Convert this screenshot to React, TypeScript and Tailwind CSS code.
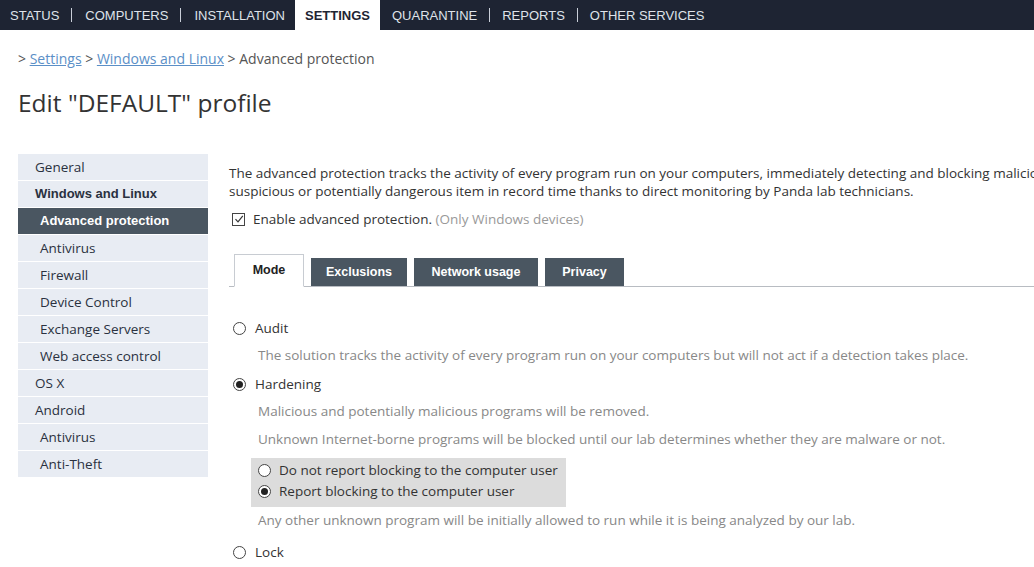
import React from "react";

const lib = { fontFamily: '"Liberation Sans", Arial, sans-serif' };
const os = { fontFamily: '"Open Sans", "Liberation Sans", Arial, sans-serif' };

function Radio({ checked }: { checked?: boolean }) {
  return (
    <span className="inline-flex items-center justify-center w-[13px] h-[13px] rounded-full border border-[#444] bg-white shrink-0">
      {checked && <span className="w-[7px] h-[7px] rounded-full bg-[#222]" />}
    </span>
  );
}

const navLeft = ["STATUS", "COMPUTERS", "INSTALLATION"];
const navRight = ["QUARANTINE", "REPORTS", "OTHER SERVICES"];

const side: { label: string; level: number; bold?: boolean; active?: boolean }[] = [
  { label: "General", level: 0 },
  { label: "Windows and Linux", level: 0, bold: true },
  { label: "Advanced protection", level: 1, active: true },
  { label: "Antivirus", level: 1 },
  { label: "Firewall", level: 1 },
  { label: "Device Control", level: 1 },
  { label: "Exchange Servers", level: 1 },
  { label: "Web access control", level: 1 },
  { label: "OS X", level: 0 },
  { label: "Android", level: 0 },
  { label: "Antivirus", level: 1 },
  { label: "Anti-Theft", level: 1 },
];

export default function App() {
  return (
    <div className="w-[1034px] h-[567px] overflow-hidden bg-white text-[#333] text-[13.5px]" style={os}>
      {/* top nav */}
      <div className="h-[30px] bg-[#1e2433] flex items-stretch text-[#dfe3ea] text-[13px]" style={lib}>
        {navLeft.map((n, i) => (
          <React.Fragment key={n}>
            {i > 0 && <span className="self-center w-px h-[14px] bg-[#c9ced8]" />}
            <span className={`flex items-center pt-px ${i === 0 ? "pl-[10px]" : "pl-[13px]"} ${i === 2 ? "pr-[10px]" : "pr-[12px]"}`}>{n}</span>
          </React.Fragment>
        ))}
        <span className="flex items-center pt-px bg-white text-[#1e2433] font-bold text-[13px] px-[10px]">SETTINGS</span>
        {navRight.map((n, i) => (
          <React.Fragment key={n}>
            {i > 0 && <span className="self-center w-px h-[14px] bg-[#c9ced8]" />}
            <span className="flex items-center pt-px pl-[12px] pr-[12px]">{n}</span>
          </React.Fragment>
        ))}
      </div>

      <div className="pl-[18px]">
        <div className="mt-[20px] h-[18px] leading-[18px] text-[14px] text-[#555]">
          &gt; <span className="text-[#5b8fc7] underline">Settings</span> &gt;{" "}
          <span className="text-[#5b8fc7] underline">Windows and Linux</span> &gt; Advanced protection
        </div>
        <h1 className="mt-[20px] text-[24.5px] leading-[30px] text-[#333]">Edit "DEFAULT" profile</h1>

        <div className="mt-[36px] flex">
          {/* sidebar */}
          <div className="w-[190px] shrink-0 flex flex-col gap-px">
            {side.map((s, i) => (
              <div
                key={i}
                className={`h-[26px] flex items-center ${s.level === 0 ? "pl-[17px]" : "pl-[22px]"} ${
                  s.active ? "bg-[#4a5661] text-white font-bold text-[13px]" : "bg-[#e8ecf3] text-[#2a3140]"
                } ${s.bold ? "font-bold text-[13px] text-[#1d2433]" : ""}`}
                style={s.bold || s.active ? lib : undefined}
              >
                {s.label}
              </div>
            ))}
          </div>

          {/* main */}
          <div className="ml-[21px] flex-1 min-w-0">
            <p className="mt-[10px] leading-[18px] whitespace-nowrap">
              The advanced protection tracks the activity of every program run on your computers, immediately detecting and blocking malicious
              <br />
              suspicious or potentially dangerous item in record time thanks to direct monitoring by Panda lab technicians.
            </p>
            <div className="mt-[9px] flex items-center gap-[8px] pl-[3px]">
              <span className="w-[13px] h-[13px] border border-[#444] flex items-center justify-center">
                <svg width="10" height="10" viewBox="0 0 10 10">
                  <path d="M1.5 5.2 L4 7.8 L8.8 1.8" fill="none" stroke="#333" strokeWidth="1.2" />
                </svg>
              </span>
              <span>
                Enable advanced protection. <span className="text-[#999]">(Only Windows devices)</span>
              </span>
            </div>

            {/* tabs */}
            <div className="mt-[25px] flex items-end border-b border-[#b8bcc2] h-[33px] pl-[5px] gap-[7px]" style={lib}>
              <div className="h-[33px] w-[70px] bg-white border border-[#c8ccd2] border-b-white mb-[-1px] flex items-center justify-center font-bold text-[12.5px] text-[#222]">
                Mode
              </div>
              <div className="h-[28px] w-[96px] bg-[#4a5661] text-white font-bold text-[12.5px] flex items-center justify-center">Exclusions</div>
              <div className="h-[28px] w-[124px] bg-[#4a5661] text-white font-bold text-[12.5px] flex items-center justify-center">Network usage</div>
              <div className="h-[28px] w-[79px] bg-[#4a5661] text-white font-bold text-[12.5px] flex items-center justify-center">Privacy</div>
            </div>

            <div className="pl-[4px]">
              <div className="mt-[32px] flex items-center gap-[9px] h-[18px]">
                <Radio /> <span className="text-[#333]">Audit</span>
              </div>
              <div className="mt-[8px] pl-[25px] h-[18px] text-[#888]">
                The solution tracks the activity of every program run on your computers but will not act if a detection takes place.
              </div>
              <div className="mt-[12px] flex items-center gap-[9px] h-[18px]">
                <Radio checked /> <span>Hardening</span>
              </div>
              <div className="mt-[8px] pl-[25px] h-[18px] text-[#888]">Malicious and potentially malicious programs will be removed.</div>
              <div className="mt-[10px] pl-[25px] h-[18px] text-[#888]">
                Unknown Internet-borne programs will be blocked until our lab determines whether they are malware or not.
              </div>
              <div className="mt-[11px] ml-[18px] w-[315px] h-[49px] bg-[#dcdcdc] flex flex-col gap-[3px] pt-[3px] pl-[7px]">
                <div className="flex items-center gap-[8px] h-[18px]">
                  <Radio /> <span>Do not report blocking to the computer user</span>
                </div>
                <div className="flex items-center gap-[8px] h-[18px]">
                  <Radio checked /> <span>Report blocking to the computer user</span>
                </div>
              </div>
              <div className="mt-[3px] pl-[25px] h-[18px] text-[#888]">
                Any other unknown program will be initially allowed to run while it is being analyzed by our lab.
              </div>
              <div className="mt-[15px] flex items-center gap-[9px] h-[18px]">
                <Radio /> <span>Lock</span>
              </div>
            </div>
          </div>
        </div>
      </div>
    </div>
  );
}
